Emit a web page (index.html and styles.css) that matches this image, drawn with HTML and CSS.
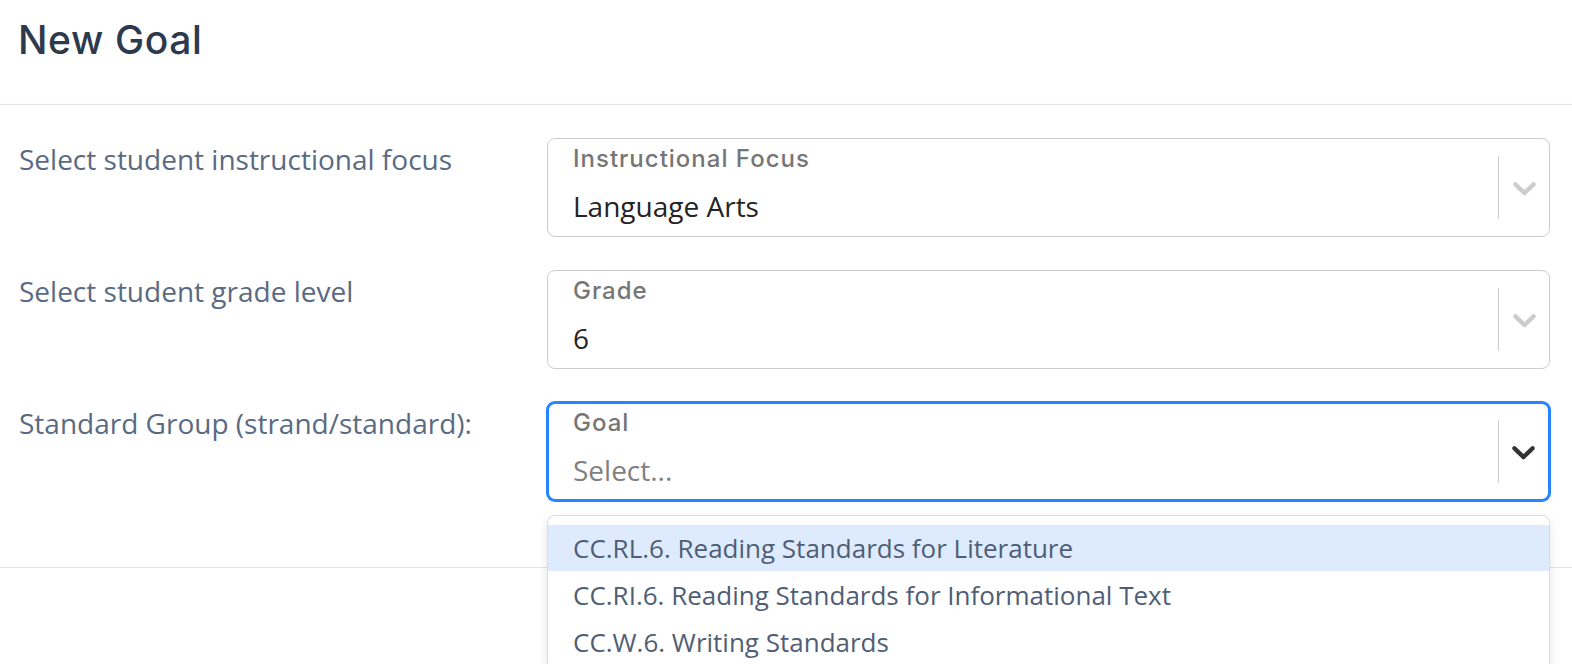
FILE: index.html
```html
<!DOCTYPE html>
<html lang="en">
<head>
<meta charset="utf-8">
<title>New Goal</title>
<link rel="stylesheet" href="styles.css">
</head>
<body>
<div class="modal">
  <div class="modal-header">
    <h2 class="modal-title">New Goal</h2>
  </div>
  <div class="modal-body">
    <div class="form-row">
      <div class="row-label">Select student instructional focus</div>
      <div class="select">
        <div class="control">
          <div class="value-area">
            <div class="float-label">Instructional Focus</div>
            <div class="value">Language Arts</div>
          </div>
          <span class="separator"></span>
          <span class="indicator">
            <svg viewBox="0 0 20 20" width="39" height="39" aria-hidden="true"><path d="M4.516 7.548c0.436-0.446 1.043-0.481 1.576 0l3.908 3.747 3.908-3.747c0.533-0.481 1.141-0.446 1.574 0 0.436 0.445 0.408 1.197 0 1.615-0.406 0.418-4.695 4.502-4.695 4.502-0.217 0.223-0.502 0.335-0.787 0.335s-0.57-0.112-0.789-0.335c0 0-4.287-4.084-4.695-4.502s-0.436-1.17 0-1.615z"/></svg>
          </span>
        </div>
      </div>
    </div>
    <div class="form-row">
      <div class="row-label">Select student grade level</div>
      <div class="select">
        <div class="control">
          <div class="value-area">
            <div class="float-label">Grade</div>
            <div class="value">6</div>
          </div>
          <span class="separator"></span>
          <span class="indicator">
            <svg viewBox="0 0 20 20" width="39" height="39" aria-hidden="true"><path d="M4.516 7.548c0.436-0.446 1.043-0.481 1.576 0l3.908 3.747 3.908-3.747c0.533-0.481 1.141-0.446 1.574 0 0.436 0.445 0.408 1.197 0 1.615-0.406 0.418-4.695 4.502-4.695 4.502-0.217 0.223-0.502 0.335-0.787 0.335s-0.57-0.112-0.789-0.335c0 0-4.287-4.084-4.695-4.502s-0.436-1.17 0-1.615z"/></svg>
          </span>
        </div>
      </div>
    </div>
    <div class="form-row">
      <div class="row-label">Standard Group (strand/standard):</div>
      <div class="select is-open">
        <div class="control is-focused">
          <div class="value-area">
            <div class="float-label">Goal</div>
            <div class="value placeholder">Select...</div>
          </div>
          <span class="separator"></span>
          <span class="indicator">
            <svg viewBox="0 0 20 20" width="39" height="39" aria-hidden="true"><path d="M4.516 7.548c0.436-0.446 1.043-0.481 1.576 0l3.908 3.747 3.908-3.747c0.533-0.481 1.141-0.446 1.574 0 0.436 0.445 0.408 1.197 0 1.615-0.406 0.418-4.695 4.502-4.695 4.502-0.217 0.223-0.502 0.335-0.787 0.335s-0.57-0.112-0.789-0.335c0 0-4.287-4.084-4.695-4.502s-0.436-1.17 0-1.615z"/></svg>
          </span>
        </div>
        <div class="menu">
          <div class="option is-focused">CC.RL.6. Reading Standards for Literature</div>
          <div class="option">CC.RI.6. Reading Standards for Informational Text</div>
          <div class="option">CC.W.6. Writing Standards</div>
        </div>
      </div>
    </div>
  </div>
  <div class="modal-footer"></div>
</div>
</body>
</html>
```
FILE: styles.css
```css
html, body {
  margin: 0;
  padding: 0;
  height: 100%;
  overflow: hidden;
  background: #ffffff;
}

body {
  font-family: "Open Sans", "Liberation Sans", sans-serif;
}

.modal {
  display: flex;
  flex-direction: column;
}

.modal-header {
  box-sizing: border-box;
  height: 105px;
  padding: 17px 18px 0;
  border-bottom: 1px solid #dbe4ef;
}

.modal-title {
  margin: 0;
  font-family: "Inter", "Noto Sans", sans-serif;
  font-weight: 500;
  font-size: 39px;
  line-height: 46px;
  letter-spacing: 0.6px;
  color: #2d3a4d;
}

.modal-body {
  display: flex;
  flex-direction: column;
  gap: 33px;
  padding: 33px 22px 66px 18px;
}

.form-row {
  display: grid;
  grid-template-columns: 529px 1fr;
  align-items: start;
}

.row-label {
  font-size: 28px;
  line-height: 42px;
  color: #5a6a82;
  padding-left: 1px;
}

.select {
  position: relative;
}

.control {
  box-sizing: border-box;
  height: 99px;
  display: flex;
  align-items: stretch;
  border: 1px solid #cccccc;
  border-radius: 8px;
  background: #ffffff;
}

.control.is-focused {
  border: 2px solid #2684ff;
  box-shadow: 0 0 0 1px #2684ff;
}

.value-area {
  flex: 1;
  padding: 7px 0 0 25px;
  min-width: 0;
}

.control.is-focused .value-area {
  padding: 6px 0 0 24px;
}

.float-label {
  font-family: "Inter", "Noto Sans", sans-serif;
  font-weight: 500;
  font-size: 24px;
  line-height: 26px;
  letter-spacing: 1px;
  color: #767676;
}

.value {
  margin-top: 14px;
  font-size: 28px;
  line-height: 40px;
  color: #242424;
}

.value.placeholder {
  color: #808080;
}

.separator {
  align-self: center;
  width: 1px;
  height: 63px;
  background: #cccccc;
}

.indicator {
  width: 50px;
  display: flex;
  align-items: center;
  justify-content: center;
  fill: #cccccc;
}

.control.is-focused .indicator {
  width: 49px;
  fill: #333333;
}

.menu {
  position: absolute;
  top: calc(100% + 14px);
  left: 0;
  right: 0;
  z-index: 2;
  background: #ffffff;
  border: 1px solid #dcdcdc;
  border-radius: 8px;
  box-shadow: 0 4px 11px rgba(0, 0, 0, 0.1);
  padding: 9px 0 8px;
}

.option {
  padding: 8px 25px;
  font-size: 26px;
  line-height: 30px;
  color: #4f5e75;
}

.option + .option {
  padding-top: 9px;
}

.option.is-focused {
  background: #deebff;
}

.modal-footer {
  border-top: 1px solid #dbe4ef;
  height: 100px;
}
```
